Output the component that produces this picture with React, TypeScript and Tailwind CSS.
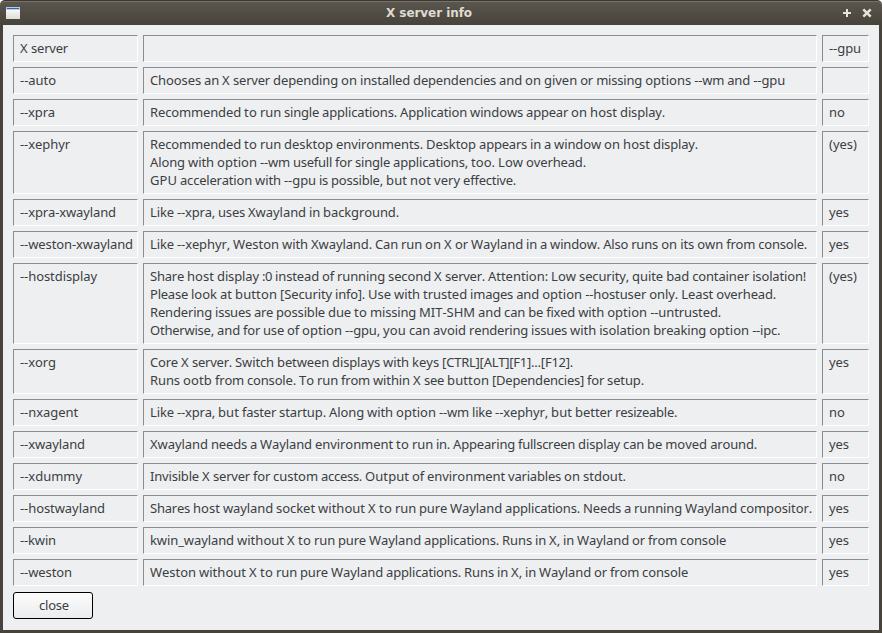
import { Fragment } from "react";

type Row = { name: string; lines: string[]; gpu: string };

const rows: Row[] = [
  { name: "X server", lines: [""], gpu: "--gpu" },
  { name: "--auto", lines: ["Chooses an X server depending on installed dependencies and on given or missing options --wm and --gpu"], gpu: "" },
  { name: "--xpra", lines: ["Recommended to run single applications. Application windows appear on host display."], gpu: "no" },
  {
    name: "--xephyr",
    lines: [
      "Recommended to run desktop environments. Desktop appears in a window on host display.",
      "Along with option --wm usefull for single applications, too. Low overhead.",
      "GPU acceleration with --gpu is possible, but not very effective.",
    ],
    gpu: "(yes)",
  },
  { name: "--xpra-xwayland", lines: ["Like --xpra, uses Xwayland in background."], gpu: "yes" },
  { name: "--weston-xwayland", lines: ["Like --xephyr, Weston with Xwayland. Can run on X or Wayland in a window. Also runs on its own from console."], gpu: "yes" },
  {
    name: "--hostdisplay",
    lines: [
      "Share host display :0 instead of running second X server. Attention: Low security, quite bad container isolation!",
      "Please look at button [Security info]. Use with trusted images and option --hostuser only. Least overhead.",
      "Rendering issues are possible due to missing MIT-SHM and can be fixed with option --untrusted.",
      "Otherwise, and for use of option --gpu, you can avoid rendering issues with isolation breaking option --ipc.",
    ],
    gpu: "(yes)",
  },
  {
    name: "--xorg",
    lines: [
      "Core X server. Switch between displays with keys [CTRL][ALT][F1]...[F12].",
      "Runs ootb from console. To run from within X see button [Dependencies] for setup.",
    ],
    gpu: "yes",
  },
  { name: "--nxagent", lines: ["Like --xpra, but faster startup. Along with option --wm like --xephyr, but better resizeable."], gpu: "no" },
  { name: "--xwayland", lines: ["Xwayland needs a Wayland environment to run in. Appearing fullscreen display can be moved around."], gpu: "yes" },
  { name: "--xdummy", lines: ["Invisible X server for custom access. Output of environment variables on stdout."], gpu: "no" },
  { name: "--hostwayland", lines: ["Shares host wayland socket without X to run pure Wayland applications. Needs a running Wayland compositor."], gpu: "yes" },
  { name: "--kwin", lines: ["kwin_wayland without X to run pure Wayland applications. Runs in X, in Wayland or from console"], gpu: "yes" },
  { name: "--weston", lines: ["Weston without X to run pure Wayland applications. Runs in X, in Wayland or from console"], gpu: "yes" },
];

const pen = document.createElement("canvas").getContext("2d")!;

// Letter spacing that brings a word to whole-pixel glyph advances, as GTK lays out hinted text.
function snap(word: string): string {
  pen.font = "13px 'Noto Sans'";
  pen.fontKerning = "none";
  let extra = 0;
  for (const ch of word) {
    const w = pen.measureText(ch).width;
    extra += Math.round(w) - w;
  }
  return `${extra / word.length}px`;
}

function HintedText({ text }: { text: string }) {
  const words = text.match(/\S+|\s+/g) ?? [];
  return (
    <Fragment>
      {words.map((word, i) => (
        <span key={i} style={{ letterSpacing: snap(word) }}>{word}</span>
      ))}
    </Fragment>
  );
}

function Cell({ lines }: { lines: string[] }) {
  return (
    <div className="min-h-[27px] border border-t-[#8b8c90] border-l-[#8b8c90] border-r-white border-b-white pt-[3px] pb-[4px] pl-[6px] whitespace-nowrap">
      {lines.map((line, i) => (
        <div key={i} className="h-[18px]"><HintedText text={line} /></div>
      ))}
    </div>
  );
}

function TitleBar() {
  return (
    <header className="flex h-[25px] shrink-0 items-center rounded-t-[5px] border-t border-[#3a3732] bg-linear-to-b from-[#5b574f] to-[#47433b] pr-[10px] pl-[6px] shadow-[inset_0_1px_0_#77736b]">
      <svg width="14" height="12" viewBox="0 0 14 12" shapeRendering="crispEdges">
        <defs>
          <linearGradient id="page" x1="0" y1="0" x2="0" y2="1">
            <stop offset="0" stopColor="#ffffff" />
            <stop offset="1" stopColor="#dedfd9" />
          </linearGradient>
        </defs>
        <rect width="14" height="12" fill="url(#page)" />
        <rect width="14" height="3" fill="#b9cbe5" />
        <rect x="1" y="1" width="12" height="1" fill="#3465a4" />
      </svg>
      <h1 className="flex-1 pr-[4px] text-center font-['DejaVu_Sans',sans-serif] text-[12px] leading-[24px] font-bold tracking-[-0.06px] text-[#dfdbd2]">
        X server info
      </h1>
      <div className="flex gap-[10px]">
        <svg width="10" height="10" viewBox="0 0 10 10" stroke="#e6e3dc" strokeWidth="2">
          <path d="M5 1v8M1 5h8" />
        </svg>
        <svg width="10" height="10" viewBox="0 0 10 10" stroke="#e6e3dc" strokeWidth="2.5">
          <path d="M1.3 1.3l7.4 7.4M8.7 1.3l-7.4 7.4" />
        </svg>
      </div>
    </header>
  );
}

export default function App() {
  return (
    <div className="flex h-[633px] w-[882px] flex-col overflow-hidden bg-white">
      <TitleBar />
      <main className="flex-1 border-x-[3px] border-b-[3px] border-[#47433b] bg-[#eeeff1] px-[10px] pt-[10px] font-['Noto_Sans',sans-serif] text-[13px] leading-[18px] text-[#3b3e42] [font-kerning:none]">
        <div className="flex flex-col gap-[5px]">
          {rows.map((row) => (
            <div key={row.name} className="grid grid-cols-[125px_674px_47px] gap-[5px]">
              <Cell lines={[row.name]} />
              <Cell lines={row.lines} />
              <Cell lines={[row.gpu]} />
            </div>
          ))}
        </div>
        <button className="mt-[6px] block h-[27px] w-[80px] rounded-[3px] border border-black bg-linear-to-b from-[#fdfdfd] to-[#ebecee] pb-[2px] pl-[2px] text-center">
          <HintedText text="close" />
        </button>
      </main>
    </div>
  );
}
